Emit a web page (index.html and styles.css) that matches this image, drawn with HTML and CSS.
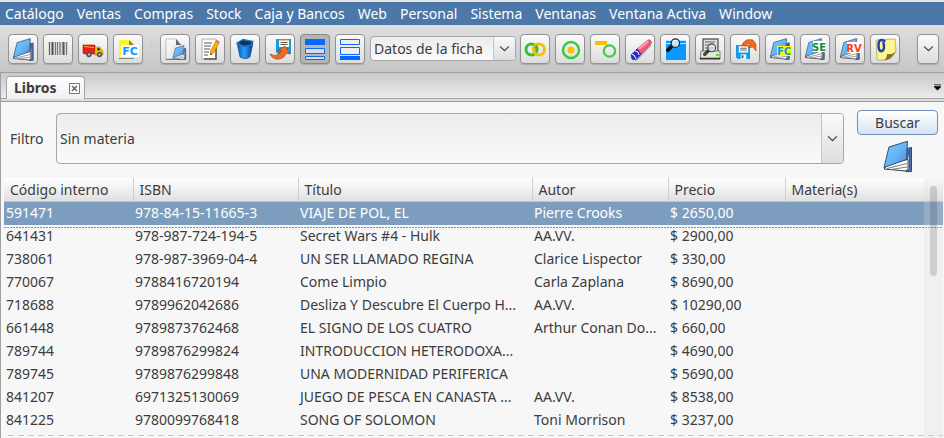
FILE: index.html
```html
<!DOCTYPE html>
<html lang="es">
<head>
<meta charset="utf-8">
<title>Libros</title>
<link rel="stylesheet" href="styles.css">
</head>
<body>
<svg class="defs" aria-hidden="true">
  <defs>
    <linearGradient id="blue" x1="0" y1="0" x2="1" y2="1"><stop offset="0" stop-color="#7cccff"/><stop offset=".55" stop-color="#62b4f6"/><stop offset="1" stop-color="#5a74d4"/></linearGradient>
    <linearGradient id="bin" x1="0" y1="0" x2="1" y2="0"><stop offset="0" stop-color="#0a52b8"/><stop offset=".45" stop-color="#2a9cf8"/><stop offset="1" stop-color="#063c96"/></linearGradient>
    <linearGradient id="sheet" x1="0" y1="0" x2="1" y2="1"><stop offset="0" stop-color="#fff"/><stop offset="1" stop-color="#ddd"/></linearGradient>
    <symbol id="book" viewBox="0 0 30 32">
      <path d="M24 8l4.500-1v24l-5 .500z" fill="#4673c4" stroke="#3c4450"/>
      <path d="M1 28L24 19l2.500-10v20l-3 1.500z" fill="#c4cad2" stroke="#4d5560"/>
      <path d="M1 28.500L7 22l18-3v9l-2 2.500z" fill="#fff" stroke="#444"/>
      <path d="M4 28l20-5M8 29l16-2.500" stroke="#777" fill="none"/>
      <path d="M6 6.500L24.500 .8 23.500 19 1 27z" fill="url(#blue)" stroke="#35506f"/>
    </symbol>
    <symbol id="lens" viewBox="0 0 16 16">
      <path d="M6 9l-4 4" stroke="#111" stroke-width="4" stroke-linecap="round"/>
      <circle cx="10" cy="5.500" r="4.500" fill="#d9ecf6" fill-opacity=".85" stroke="#222" stroke-width="1.300"/>
      <path d="M7.500 4.500q2-2.500 4-1.500" stroke="#fff" fill="none"/>
    </symbol>
    <symbol id="floppy" viewBox="0 0 15 15">
      <path d="M0 0h15v15H2L0 13z" fill="#169be0"/>
      <path d="M3 0h10v8H3z" fill="#fff"/><path d="M3 0h10v1.500H3z" fill="#f26a1b"/>
      <path d="M4.500 3.500h7M4.500 5.500h7" stroke="#555"/><path d="M5 10h6v5H5z" fill="#e8f2f8"/><path d="M6 11h2v3H6z" fill="#1670a8"/>
    </symbol>
  </defs>
</svg>

<nav class="menubar" aria-label="Menú principal">
  <a href="#">Catálogo</a><a href="#">Ventas</a><a href="#">Compras</a><a href="#">Stock</a><a href="#">Caja y Bancos</a><a href="#">Web</a><a href="#">Personal</a><a href="#">Sistema</a><a href="#">Ventanas</a><a href="#">Ventana Activa</a><a href="#">Window</a>
</nav>

<div class="toolbar" role="toolbar" aria-label="Herramientas">
  <div class="group">
    <button aria-label="Libros"><svg viewBox="0 0 24 24"><use href="#book" x="1" y="1" width="23" height="23"/></svg></button>
    <button aria-label="Código de barras"><svg viewBox="0 0 24 24"><path d="M2 5h20v13H2z" fill="#d6d6d6"/><path d="M3.500 5v13M14 5v13" stroke="#666" stroke-width="1"/><path d="M6.500 5v13M17.500 5v13" stroke="#555" stroke-width="2"/><path d="M9.500 5v13M11.500 5v13M20.500 5v13" stroke="#777"/></svg></button>
    <button aria-label="Envíos"><svg viewBox="0 0 24 24"><path d="M2 8h12v9H3l-1-1z" fill="#ee1c12" stroke="#b01008" stroke-width=".6"/><path d="M3 9.500l10 1" stroke="#ffb020" stroke-width="1"/><path d="M14 10h5l2 3 1 1v4h-8z" fill="#f5c800" stroke="#a88400" stroke-width=".6"/><path d="M16 11h2.500l1 2.500H16z" fill="#444"/><circle cx="8" cy="17.500" r="2.700" fill="#555"/><circle cx="18.500" cy="17.500" r="2.700" fill="#555"/><circle cx="8" cy="17.500" r="1" fill="#ddd"/><circle cx="18.500" cy="17.500" r="1" fill="#ddd"/></svg></button>
    <button aria-label="Factura"><svg viewBox="0 0 24 24"><path d="M3 3h10l5 5v13H3z" fill="#fff32c"/><path d="M13 3l5 5h-5z" fill="#888a20"/><path d="M3 21.500h15" stroke="#887" /><path d="M5 8h18v12H5z" fill="#fff"/><text x="14" y="18" class="code sky">FC</text></svg></button>
  </div>
  <span class="divider"></span>
  <div class="group">
    <button aria-label="Nuevo libro"><svg viewBox="0 0 24 24"><path d="M3 2h10l5 6v14H3z" fill="url(#sheet)" stroke="#aaa" stroke-width=".7"/><path d="M13 2l5 6h-5z" fill="#666"/><path d="M3 22.500h17" stroke="#777"/><use href="#book" x="9" y="8" width="15" height="15"/></svg></button>
    <button aria-label="Editar"><svg viewBox="0 0 24 24"><path d="M4 2h14v20H4z" fill="#fff" stroke="#999" stroke-width=".8"/><path d="M18 6v16H6" fill="none" stroke="#555" stroke-width="1.500"/><path d="M6 6h8M6 9h7M6 12h6M6 15h5M6 18h4" stroke="#555"/><path d="M18.500 3l3 2-6 11-3 2 0-4z" fill="#ffb000" stroke="#bd7500" stroke-width=".6"/><path d="M18.500 3l3 2-1 1.500-3-2z" fill="#e8745c"/><path d="M12.500 18l.2-2 1.500 1z" fill="#222"/></svg></button>
    <button aria-label="Eliminar"><svg viewBox="0 0 24 24"><path d="M4 6l3 14q5 3.500 10 0l3-14z" fill="url(#bin)" stroke="#083a80" stroke-width=".6"/><path d="M4 6l6-3.500 10 2L18 8l-7 1.500z" fill="#153353" stroke="#1879d4" stroke-width="1.300"/></svg></button>
    <button aria-label="Guardar y salir"><svg viewBox="0 0 24 24"><use href="#floppy" x="8" y="2" width="15" height="15"/><path d="M2 17q5 3 9 0 2-2 2-4l-4 1 8-5 5 8-4-1q-1 5-7 6-6 1-9-5z" fill="#f26a1b" stroke="#9a3c0c" stroke-width=".6"/></svg></button>
    <button class="pressed" aria-label="Vista superior" aria-pressed="true"><svg viewBox="0 0 24 24"><path d="M2 2h20v6H2z" fill="#0868ff"/><path d="M2.500 11.500h19v5h-19zM2.500 19.500h19v3h-19z" fill="#ddd" stroke="#0868ff"/></svg></button>
    <button aria-label="Vista inferior"><svg viewBox="0 0 24 24"><path d="M2.500 2.500h19v5h-19zM2.500 10.500h19v7h-19z" fill="#eee" stroke="#0868ff"/><path d="M2 19h20v4H2z" fill="#0868ff"/></svg></button>
  </div>
  <div class="combo small">
    <select aria-label="Vista"><option>Datos de la ficha</option></select>
    <span class="arrow"><svg viewBox="0 0 12 8"><path d="M1 1.500l5 5 5-5"/></svg></span>
  </div>
  <div class="group">
    <button aria-label="Unir"><svg viewBox="0 0 24 24" fill="none" stroke-width="3"><circle cx="8.500" cy="12.500" r="5.500" stroke="#35c22e"/><circle cx="16" cy="12.500" r="5.500" stroke="#f8c000"/><path d="M12.500 8.800a5.500 5.500 0 0 1 1.500 3.700" stroke="#35c22e"/></svg></button>
    <button aria-label="Centrar"><svg viewBox="0 0 24 24"><circle cx="13" cy="13" r="8" fill="none" stroke="#35cc38" stroke-width="2.400"/><circle cx="13" cy="13" r="3.500" fill="#fcc000"/></svg></button>
    <button aria-label="Quitar"><svg viewBox="0 0 24 24"><path d="M2 4h12v4H2z" fill="#fcc000"/><circle cx="16.500" cy="14" r="5.700" fill="none" stroke="#45cc48" stroke-width="2.200"/></svg></button>
    <button aria-label="Borrar"><svg viewBox="0 0 24 24"><path d="M4 23l5 .5L23 9V6z" fill="#777" opacity=".6"/><path d="M9 12L20 3q3-1 3.500 3L12 18z" fill="#f4587c" stroke="#b83058" stroke-width=".6"/><path d="M11 12l9.500-8" stroke="#ffa0b8" stroke-width="2"/><path d="M3 18l6-6 4 5-5 5.500-4-.5z" fill="#2828dc" stroke="#181890" stroke-width=".6"/><path d="M4 17.500l2 .5 2 4M7 14l3 1 1 3" stroke="#fff" fill="none"/></svg></button>
    <button aria-label="Buscar en pantalla"><svg viewBox="0 0 24 24"><path d="M3 3h20v20H3z" fill="#0898ff"/><path d="M3 3h20v1H3zM3 6h20v1H3z" fill="#bfe4ff"/><use href="#lens" x="3" y="1" width="15" height="15"/></svg></button>
    <button aria-label="Vista previa"><svg viewBox="0 0 24 24"><path d="M5 2h15v13H5z" fill="#ddd" stroke="#666" stroke-width="1.500"/><path d="M7 5h10M7 8h9M7 11h9" stroke="#666"/><path d="M3 14h19v8H2z" fill="#e5e8cf" stroke="#555" stroke-width=".7"/><path d="M2 21.500h20" stroke="#333" stroke-width="1.500"/><path d="M18 17h3v2h-3z" fill="#4bea20"/><use href="#lens" x="5" y="6" width="14" height="14" opacity=".75"/></svg></button>
    <button aria-label="Recuperar"><svg viewBox="0 0 24 24"><use href="#floppy" x="3" y="8" width="14" height="14"/><path d="M9 8q3-7 11-5l3 4v7l-3-4-5 1 2-4q-3-1-4 2z" fill="#f26a1b" stroke="#aa4510" stroke-width=".6"/></svg></button>
    <button aria-label="Facturar libro"><svg viewBox="0 0 24 24"><use href="#book" x="1" y="1" width="22" height="22"/><path d="M9 9h15v10H9z" fill="#ff0"/><text x="16" y="18" class="code mid azure">FC</text></svg></button>
    <button aria-label="Seña"><svg viewBox="0 0 24 24"><use href="#book" x="1" y="1" width="22" height="22"/><path d="M10 4h13v11H10z" fill="#fff"/><text x="16" y="14" class="code mid green">SE</text></svg></button>
    <button aria-label="Reserva"><svg viewBox="0 0 24 24"><use href="#book" x="1" y="1" width="22" height="22"/><path d="M9 5h14v11H9z" fill="#fff"/><text x="16" y="15" class="code mid red">RV</text></svg></button>
    <button aria-label="Nota"><svg viewBox="0 0 24 24"><path d="M3 3l19-1 1 12q-3 8-10 9H4z" fill="#fcf78c" stroke="#aaa040" stroke-width=".7"/><path d="M23 13q-4 10-12 10 3-2 3-6 7 1 9-4z" fill="#866a2c"/><path d="M11.500 4q-6-3-6 4 0 7 3.500 6 3-1 1.500-8" fill="none" stroke="#1c40b8" stroke-width="2.500" stroke-linecap="round"/></svg></button>
  </div>
  <button class="more" aria-label="Más herramientas"><svg class="chevron" viewBox="0 0 12 8"><path d="M1 1.500l5 5 5-5"/></svg></button>
</div>

<main class="workspace">
  <div class="tabs">
    <div class="tab"><span>Libros</span><button class="close" aria-label="Cerrar Libros"><svg viewBox="0 0 11 11"><path d="M.5.500h10v10H.500z" fill="#fff" stroke="#777"/><path d="M3 3l5 5M8 3L3 8" stroke="#666" stroke-width="1.600"/></svg></button></div>
    <button class="tablist" aria-label="Lista de pestañas"><svg viewBox="0 0 8 7"><path d="M0 0h8v1H0zM0 2h8v1L4 7 0 3z"/></svg></button>
  </div>
  <form class="filter">
    <label for="materia">Filtro</label>
    <div class="combo large">
      <select id="materia"><option>Sin materia</option></select>
      <span class="arrow"><svg viewBox="0 0 12 8"><path d="M1 1.500l5 5 5-5"/></svg></span>
    </div>
    <div class="actions">
      <button type="button" class="search">Buscar</button>
      <svg class="bigbook" viewBox="0 0 30 32"><use href="#book" width="30" height="32"/></svg>
    </div>
  </form>
  <div class="results">
    <table>
      <colgroup><col class="c-code"><col class="c-isbn"><col class="c-title"><col class="c-author"><col class="c-price"><col></colgroup>
      <thead><tr><th>Código interno</th><th>ISBN</th><th>Título</th><th>Autor</th><th>Precio</th><th>Materia(s)</th></tr></thead>
      <tbody>
        <tr class="selected"><td>591471</td><td>978-84-15-11665-3</td><td>VIAJE DE POL, EL</td><td>Pierre Crooks</td><td>$ 2650,00</td><td></td></tr>
        <tr><td>641431</td><td>978-987-724-194-5</td><td>Secret Wars #4 - Hulk</td><td>AA.VV.</td><td>$ 2900,00</td><td></td></tr>
        <tr><td>738061</td><td>978-987-3969-04-4</td><td>UN SER LLAMADO REGINA</td><td>Clarice Lispector</td><td>$ 330,00</td><td></td></tr>
        <tr><td>770067</td><td>9788416720194</td><td>Come Limpio</td><td>Carla Zaplana</td><td>$ 8690,00</td><td></td></tr>
        <tr><td>718688</td><td>9789962042686</td><td>Desliza Y Descubre El Cuerpo H...</td><td>AA.VV.</td><td>$ 10290,00</td><td></td></tr>
        <tr><td>661448</td><td>9789873762468</td><td>EL SIGNO DE LOS CUATRO</td><td>Arthur Conan Do...</td><td>$ 660,00</td><td></td></tr>
        <tr><td>789744</td><td>9789876299824</td><td>INTRODUCCION HETERODOXA...</td><td></td><td>$ 4690,00</td><td></td></tr>
        <tr><td>789745</td><td>9789876299848</td><td>UNA MODERNIDAD PERIFERICA</td><td></td><td>$ 5690,00</td><td></td></tr>
        <tr><td>841207</td><td>6971325130069</td><td>JUEGO DE PESCA EN CANASTA ...</td><td>AA.VV.</td><td>$ 8538,00</td><td></td></tr>
        <tr><td>841225</td><td>9780099768418</td><td>SONG OF SOLOMON</td><td>Toni Morrison</td><td>$ 3237,00</td><td></td></tr>
      </tbody>
    </table>
    <div class="cutline"></div>
    <div class="scrollbar"><div class="thumb"></div></div>
  </div>
</main>
</body>
</html>
```
FILE: styles.css
```css
* { box-sizing: border-box; }

body {
  margin: 0;
  min-height: 100vh;
  display: flex;
  flex-direction: column;
  overflow: hidden;
  background: #f7f7f7;
  color: #3c3c3c;
  font: 14px/20px "Noto Sans", "Open Sans", sans-serif;
}

button, select { font: inherit; color: inherit; margin: 0; }
button { padding: 0; display: flex; align-items: center; justify-content: center; }
svg { display: block; }
.defs { position: absolute; width: 0; height: 0; }

.menubar {
  display: flex;
  align-items: center;
  gap: 13px;
  height: 25px;
  padding-left: 5px;
  border-top: 2px solid #e8e6e3;
  background: #4b78a9;
  white-space: nowrap;
}
.menubar a { color: #fff; text-decoration: none; }

.toolbar {
  display: flex;
  align-items: center;
  height: 47px;
  padding: 0 5px 0 8px;
  background: linear-gradient(#dedede, #c6c6c6);
}
.group { display: flex; gap: 5px; }
.group button, .more {
  width: 30px;
  height: 30px;
  border: 1px solid #929292;
  border-radius: 4px;
  background: linear-gradient(#fbfbfb, #dcdcdc);
  box-shadow: 0 1px 1px #aaa;
}
.group button.pressed { background: #b5b5b5; border-color: #888; }
.group svg { width: 24px; height: 24px; }
.toolbar .more { width: 22px; margin-left: auto; }
.divider { width: 1px; height: 20px; margin: 0 8px; background: #d0d0d0; }

.code { font: bold 11px "DejaVu Sans", sans-serif; text-anchor: middle; }
.code.mid { font-size: 10px; }
.sky { fill: #0898ff; }
.azure { fill: #0898e8; }
.green { fill: #128c32; }
.red { fill: #ff3b10; }

.combo { display: grid; grid-template-columns: 1fr auto; }
.combo select {
  grid-area: 1 / 1 / 2 / 3;
  appearance: none;
  width: 100%;
  padding: 0 26px 0 3px;
  border: 1px solid #a6a6a6;
  border-radius: 4px;
  background: linear-gradient(#ececec, #fafafa);
  outline: none;
}
.combo .arrow {
  grid-area: 1 / 2;
  display: flex;
  align-items: center;
  justify-content: center;
  width: 22px;
  margin: 1px;
  border-left: 1px solid #c4c4c4;
  border-radius: 0 3px 3px 0;
  background: linear-gradient(#fafafa, #dedede);
  pointer-events: none;
}
.arrow svg, .chevron { width: 11px; height: 7px; fill: none; stroke: #444; stroke-width: 1.4; }
.combo.small { width: 146px; height: 25px; margin: 0 4px 0 5px; }
.combo.large { flex: 1; height: 51px; }

.workspace {
  flex: 1;
  border-top: 1px solid #a0a0a0;
  border-left: 1px solid #a0a0a0;
}
.tabs {
  display: flex;
  align-items: flex-end;
  justify-content: space-between;
  height: 29px;
  padding: 0 3px 0 5px;
  border-bottom: 1px solid #9c9c9c;
  background: linear-gradient(#c9c9c9, #ececec 25px, #a4a4a4 25px, #a4a4a4 26px, #dcdcdc 26px);
}
.tab {
  display: flex;
  align-items: center;
  align-self: flex-start;
  gap: 12px;
  height: 23px;
  margin-top: 3px;
  padding: 0 4px 0 7px;
  border: 1px solid #a4a4a4;
  border-bottom: 0;
  border-radius: 4px 4px 0 0;
  background: linear-gradient(#fff, #f0f0f0);
  font-weight: bold;
}
.close, .tablist { border: 0; background: none; }
.close svg { width: 11px; height: 11px; }
.tablist { align-self: center; }
.tablist svg { width: 7px; height: 7px; }

.filter {
  display: flex;
  align-items: flex-start;
  padding: 8px 6px 5px 9px;
}
.filter label { width: 46px; line-height: 57px; }
.filter .combo { margin-top: 3px; }
.actions { display: flex; flex-direction: column; align-items: center; gap: 5px; margin-left: 13px; }
.search {
  width: 81px;
  height: 25px;
  border: 1px solid #6f90b8;
  border-radius: 4px;
  background: linear-gradient(#fff, #d5e3ef);
}
.bigbook { width: 30px; height: 33px; }

.results { position: relative; margin-left: 3px; padding-right: 1px; }
table { width: 100%; table-layout: fixed; border-collapse: collapse; white-space: nowrap; }
.c-code { width: 129px; }
.c-isbn { width: 165px; }
.c-title { width: 234px; }
.c-author { width: 136px; }
.c-price { width: 117px; }
th {
  height: 24px;
  padding: 0 6px;
  border-right: 1px solid #cfcfcf;
  box-shadow: inset 0 -1px #c4c4c4;
  background: linear-gradient(#fff, #dfdfdf);
  font-weight: normal;
  text-align: left;
}
th:last-child { border-right: 0; }
td { height: 23px; padding: 0 0 2px 2px; overflow: hidden; }
.selected { background: #7d9dbe; color: #fff; }
.selected + tr {
  background: repeating-linear-gradient(90deg, #8c8c80 0 2px, transparent 2px 3px) 0 2px / 100% 1px no-repeat;
}
.cutline {
  height: 1px;
  margin-top: 3px;
  background: repeating-linear-gradient(90deg, transparent 0 4px, #c4c4c4 4px 10px);
}
.scrollbar {
  position: absolute;
  top: 0;
  right: 1px;
  bottom: -4px;
  width: 19px;
  padding: 8px 6px;
  background: rgba(240, 240, 240, 0.25);
  box-shadow: inset 0 0 0 20px rgba(0, 0, 0, 0.02);
}
.thumb { height: 90px; border-radius: 4px; background: rgba(0, 0, 0, 0.14); }
```
